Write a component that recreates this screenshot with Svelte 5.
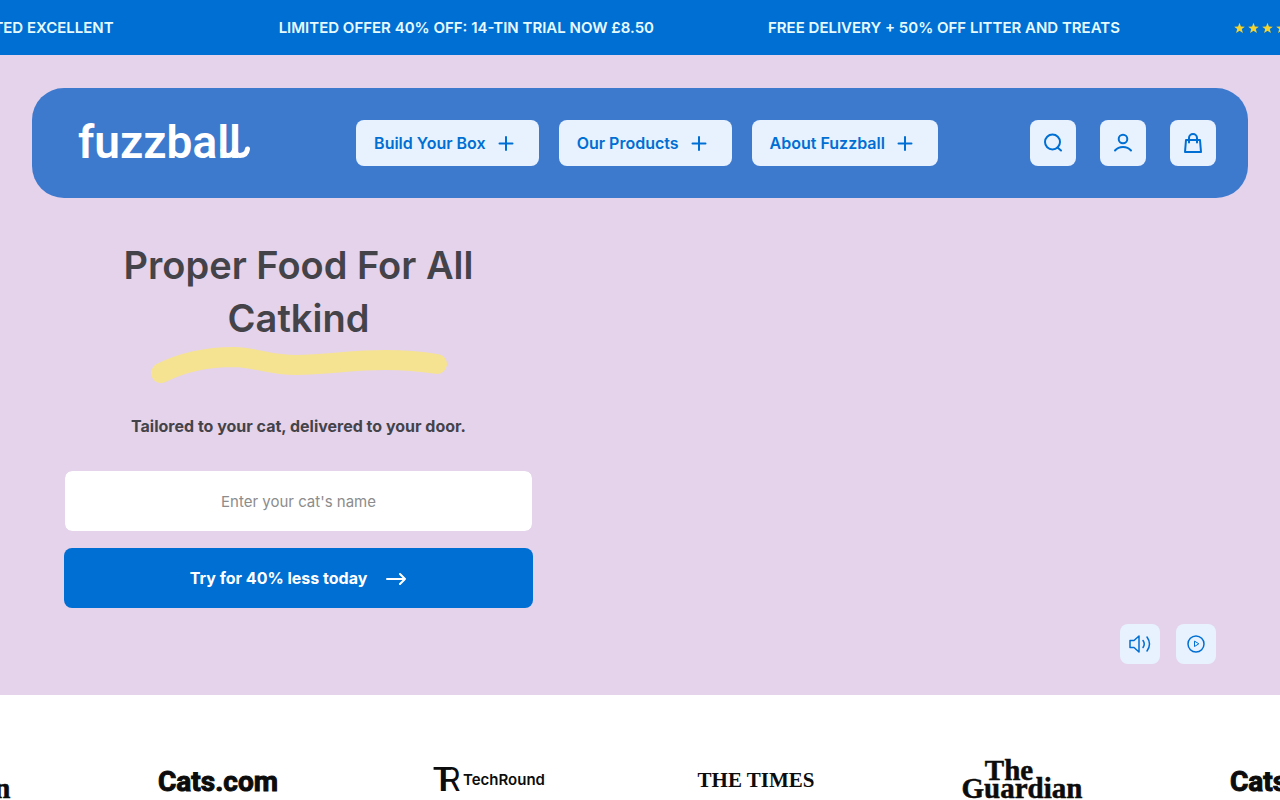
<script>
  const menu = ["Build Your Box", "Our Products", "About Fuzzball"]

  const offers = [
    { rated: true, text: "RATED EXCELLENT" },
    { text: "LIMITED OFFER 40% OFF: 14-TIN TRIAL NOW £8.50" },
    { text: "FREE DELIVERY + 50% OFF LITTER AND TREATS" },
    { rated: true, text: "RATED EXCELLENT" },
  ]

  const press = ["guardian", "cats", "techround", "times", "guardian", "cats"]

  let catName = $state("")
</script>

<div class="page">
  <div class="ticker">
    <div class="ticker-track">
      {#each offers as offer}
        <div class="offer" class:rated={offer.rated}>
          {#if offer.rated}
            <svg class="stars" viewBox="0 0 70 14" aria-label="5 stars">
              {#each [0, 1, 2, 3, 4] as n}
                <path transform="translate({n * 14} 0)" d="M5.5 1.8 6.9 5.6 10.8 5.7 7.8 8.1 8.9 12 5.5 9.8 2.1 12 3.2 8.1 .2 5.7 4.1 5.6Z" />
              {/each}
            </svg>
          {/if}
          <span>{offer.text}</span>
        </div>
      {/each}
    </div>
  </div>

  <section class="hero">
    <header class="header">
      <a class="logo" href="/" aria-label="fuzzball">
        <svg viewBox="0 0 172 46">
          <text x="0" y="38">fuzzball</text>
          <path d="M145 30Q145 35.500 150 35.500Q155 35.500 157 29Q157 35.500 162 35.500Q168.500 35.500 169.500 29" />
        </svg>
      </a>

      <nav class="menu">
        {#each menu as item}
          <button class="menu-item">
            {item}
            <svg viewBox="0 0 24 24"><path d="M12 6v13M5.500 12.500h13" /></svg>
          </button>
        {/each}
      </nav>

      <div class="actions">
        <button class="action" aria-label="Search">
          <svg viewBox="0 0 24 24"><circle cx="11.500" cy="11" r="7.500" /><path d="M16.500 16.500 20 19.500" /></svg>
        </button>
        <button class="action" aria-label="Account">
          <svg viewBox="0 0 24 24"><circle cx="12" cy="8" r="4.300" /><path d="M4 19.500Q7 16 12 16T20 19.500" /></svg>
        </button>
        <button class="action" aria-label="Basket">
          <svg viewBox="0 0 24 24"><path d="M5 9H19L20 21H4ZM8 11.500V7a4 4 0 0 1 8 0v4.500" /></svg>
        </button>
      </div>
    </header>

    <div class="hero-body">
      <form class="signup" onsubmit={(e) => e.preventDefault()}>
        <h1>Proper Food For All Catkind</h1>
        <svg class="squiggle" viewBox="0 0 298 40">
          <path d="M11 28C29 19 53 12 84 12C109 13 119 20 146 20C180 19 205 15 235 15Q262 15 287 19" />
        </svg>
        <p>Tailored to your cat, delivered to your door.</p>
        <input type="text" aria-label="Cat's name" placeholder="Enter your cat's name" bind:value={catName} />
        <button class="submit" type="submit">
          Try for 40% less today
          <svg viewBox="0 0 22 14"><path d="M2 8H20M15 3 20 8 15 13" /></svg>
        </button>
      </form>

      <div class="media">
        <button aria-label="Sound">
          <svg viewBox="0 0 24 24"><path d="M2 8.500H6L11 4V20L6 15.500H2ZM15 8.500Q17.500 12 15 15.500M19 5Q24 12 19 19" /></svg>
        </button>
        <button aria-label="Play">
          <svg viewBox="0 0 24 24"><circle cx="12" cy="12" r="8" /><path class="play" d="M10.500 9.500V14.500L14.500 12Z" /></svg>
        </button>
      </div>
    </div>
  </section>

  <section class="press">
    <div class="press-track">
      {#each press as name}
        <svg class="press-logo {name}" viewBox="0 0 120 42">
          {#if name === "guardian"}
            <text x="47" y="22">The</text>
            <text x="60" y="40">Guardian</text>
          {:else if name === "cats"}
            <text x="60" y="33">Cats.com</text>
          {:else if name === "techround"}
            <text class="mark" x="6" y="33">T</text>
            <text class="mark" x="14" y="33">R</text>
            <text x="37" y="27">TechRound</text>
          {:else}
            <text x="62" y="29">THE TIMES</text>
          {/if}
        </svg>
      {/each}
    </div>
  </section>
</div>

<style>
  :global(body) {
    margin: 0;
    background: #fff;
  }

  .page {
    --blue: #006fd3;
    --pale: #e8f2ff;
    --ink: #444349;
    font-family: Inter, "Liberation Sans", sans-serif;
    color: var(--ink);
    overflow: hidden;
  }

  button,
  input {
    font: inherit;
    border: 0;
    border-radius: 8px;
    box-sizing: border-box;
  }

  button {
    cursor: pointer;
    padding: 0;
  }

  svg {
    display: block;
    flex-shrink: 0;
  }

  path,
  circle {
    fill: none;
    stroke: currentColor;
    stroke-width: 2;
    stroke-linecap: round;
    stroke-linejoin: round;
  }

  .ticker {
    background: var(--blue);
    color: #e6fbff;
    font-size: 15px;
    font-weight: 600;
    line-height: 55px;
    overflow: hidden;
  }

  .ticker-track {
    display: flex;
    gap: 114px;
    width: max-content;
    margin-left: -108px;
  }

  .offer {
    display: flex;
    align-items: center;
    gap: 12px;
    white-space: nowrap;
  }

  .offer.rated {
    padding-right: 51px;
  }

  .stars {
    width: 70px;
    height: 14px;
  }

  .stars path {
    fill: #f3d32f;
    stroke: none;
  }

  .hero {
    background: #e4d3eb;
    padding: 33px 32px 31px;
  }

  .header {
    display: flex;
    align-items: center;
    justify-content: space-between;
    padding: 32px;
    border-radius: 32px;
    background: #3d7ace;
  }

  .logo {
    padding: 0 14px;
    color: #fff;
  }

  .logo svg {
    width: 172px;
    height: 46px;
    overflow: visible;
  }

  .logo text {
    font-family: Roboto, sans-serif;
    font-size: 46px;
    font-weight: 600;
    fill: currentColor;
  }

  .logo path {
    stroke-width: 5;
  }

  .menu {
    display: flex;
    gap: 20px;
  }

  .menu-item {
    display: flex;
    align-items: center;
    gap: 8px;
    height: 46px;
    padding: 0 21px 0 18px;
    background: var(--pale);
    color: var(--blue);
    font-size: 16px;
    font-weight: 600;
    white-space: nowrap;
  }

  .menu-item svg {
    width: 24px;
    height: 24px;
  }

  .actions {
    display: flex;
    gap: 24px;
  }

  .action,
  .media button {
    display: grid;
    place-items: center;
    width: 46px;
    height: 46px;
    background: var(--pale);
    color: var(--blue);
  }

  .action svg,
  .media svg {
    width: 24px;
    height: 24px;
  }

  .hero-body {
    display: flex;
    justify-content: space-between;
    align-items: flex-end;
    padding: 41px 32px 0;
  }

  .signup {
    display: flex;
    flex-direction: column;
    align-items: center;
    width: 40%;
    min-width: 469px;
    padding-bottom: 56px;
    text-align: center;
  }

  h1 {
    max-width: 400px;
    margin: 0;
    font-size: 38px;
    font-weight: 600;
    line-height: 53px;
  }

  .squiggle {
    width: 298px;
    height: 40px;
    color: #f6e391;
  }

  .squiggle path {
    stroke-width: 20;
  }

  p {
    margin: 28px 0 31px;
    font-size: 16px;
    font-weight: 700;
    line-height: 26px;
  }

  input {
    width: 100%;
    height: 62px;
    border: 1px solid #e4d3eb;
    background: #fff;
    background-clip: padding-box;
    font-size: 15px;
    text-align: center;
    color: var(--ink);
  }

  input::placeholder {
    color: #8c8c8c;
  }

  .submit {
    display: flex;
    align-items: center;
    justify-content: center;
    gap: 18px;
    width: 100%;
    height: 60px;
    margin-top: 16px;
    background: var(--blue);
    color: #fff;
    font-size: 16px;
    font-weight: 700;
  }

  .submit svg {
    width: 22px;
    height: 14px;
  }

  .media {
    display: flex;
    gap: 16px;
  }

  .media button {
    width: 40px;
    height: 40px;
  }

  .media path,
  .media circle {
    stroke-width: 1.500;
  }

  .media .play {
    stroke-width: 1;
  }

  .press {
    padding: 63px 0;
    background: #fff;
    overflow: hidden;
  }

  .press-track {
    display: flex;
    gap: 148px;
    width: max-content;
    margin-left: -110px;
  }

  .press-logo {
    width: 120px;
    height: 42px;
    overflow: visible;
  }

  .press-logo text {
    fill: #0c0c0c;
    text-anchor: middle;
  }

  .press-logo.guardian text {
    font-family: "Liberation Serif", serif;
    font-size: 29px;
    font-weight: 700;
    stroke: #0c0c0c;
    stroke-width: 0.500;
  }

  .press-logo.cats text {
    font-family: Roboto, sans-serif;
    font-size: 28px;
    font-weight: 700;
    stroke: #0c0c0c;
    stroke-width: 1;
  }

  .press-logo.techround text {
    font-size: 15px;
    font-weight: 600;
    text-anchor: start;
  }

  .press-logo.techround .mark {
    font-size: 32px;
    font-weight: 400;
  }

  .press-logo.times text {
    font-family: "Liberation Serif", serif;
    font-size: 21px;
    font-weight: 700;
  }
</style>
